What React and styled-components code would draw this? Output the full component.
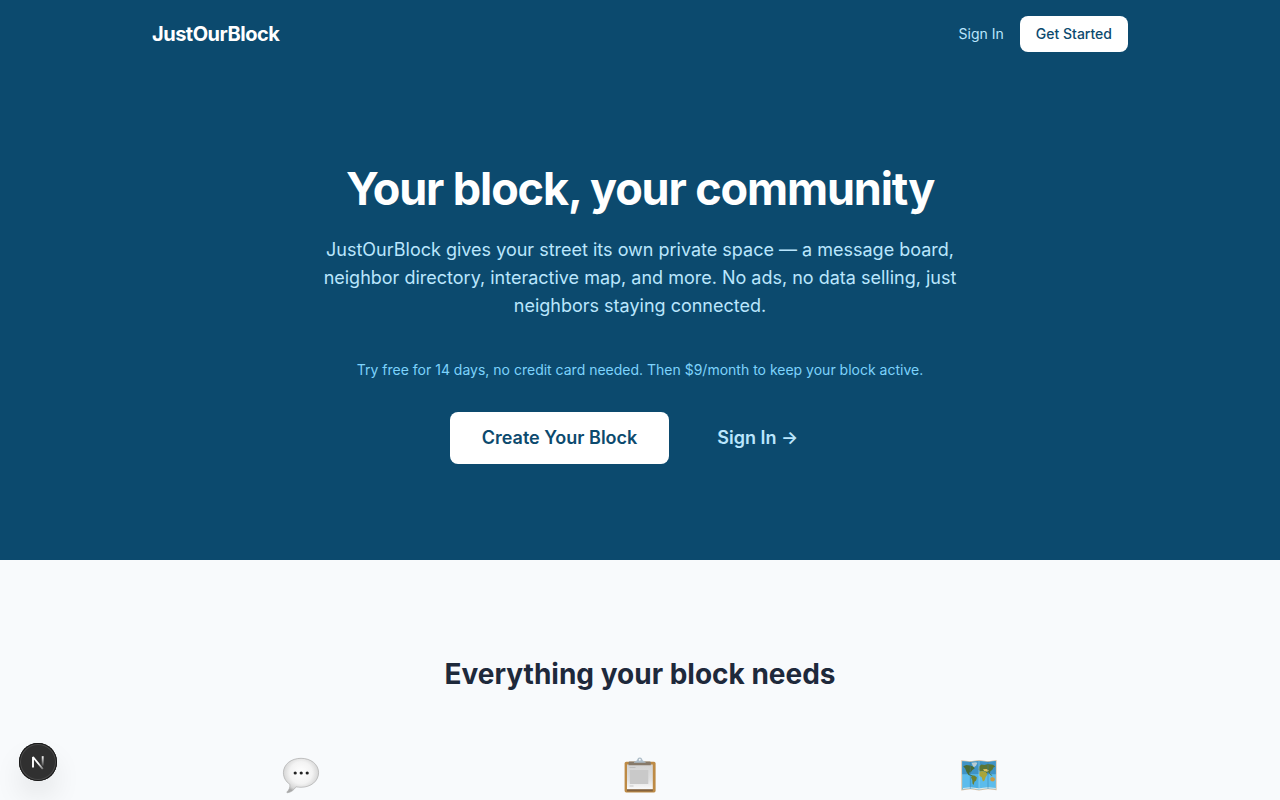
import styled, { createGlobalStyle } from "styled-components";

const GlobalStyle = createGlobalStyle`
    *, *::before, *::after {
        box-sizing: border-box;
    }
    body {
        margin: 0;
        background: #f8fafc;
        font-family: Inter, "Liberation Sans", sans-serif;
        -webkit-font-smoothing: antialiased;
    }
`

function ChatIcon(){
    return(
        <svg width="40" height="40" viewBox="0 0 40 40" aria-hidden="true">
            <defs>
                <radialGradient id="bubble" cx="50%" cy="42%" r="58%">
                    <stop offset="0" stopColor="#ffffff"/>
                    <stop offset="0.55" stopColor="#f3f3f3"/>
                    <stop offset="0.85" stopColor="#d6d6d6"/>
                    <stop offset="1" stopColor="#a9a9a9"/>
                </radialGradient>
            </defs>
            <path d="M20 2.3C10.2 2.3 2.4 8.4 2.4 16.7c0 4.9 2.5 9 6.5 11.7.2 3-.8 5.6-2.9 7.500-.4.5-.1.9.5.8 3.500-.4 6.600-2.600 8.400-5.900 1.600.3 3.300.5 5.100.5 9.800 0 17.600-6.200 17.600-14.600S29.800 2.300 20 2.300z" fill="url(#bubble)" stroke="#a3a3a3" strokeWidth="0.6"/>
            <circle cx="14.2" cy="17" r="1.600" fill="#222"/>
            <circle cx="20.2" cy="17" r="1.600" fill="#222"/>
            <circle cx="26.2" cy="17" r="1.600" fill="#222"/>
        </svg>
    )
}

function ClipboardIcon(){
    return(
        <svg width="40" height="40" viewBox="0 0 40 40" aria-hidden="true">
            <defs>
                <linearGradient id="paper" x1="0" y1="0" x2="0" y2="1">
                    <stop offset="0" stopColor="#d3d3d3"/>
                    <stop offset="0.6" stopColor="#e0e0e0"/>
                    <stop offset="1" stopColor="#fafafa"/>
                </linearGradient>
            </defs>
            <rect x="4.6" y="5.8" width="31" height="30.6" rx="1.6" fill="#bd8a45"/>
            <rect x="7" y="33" width="25.8" height="2.4" fill="#83623f"/>
            <rect x="7" y="8.5" width="25.8" height="24.7" fill="url(#paper)"/>
            <rect x="9.8" y="14" width="18.5" height="14" fill="#c9c9c9"/>
            <path d="M9.5 11.5h6M9.500 30h4" stroke="#b5b5b5" strokeWidth="0.7"/>
            <path d="M8.6 9.300V6.700c0-.7.5-1.200 1.200-1.200h19.800c.7 0 1.200.5 1.200 1.200v2.600z" fill="#877a6a"/>
            <path d="M13.800 6.700c0-1.500 2-1.300 3-2.300.8-.8.900-2.800 3-2.800s2.200 2 3 2.800c1 1 3 .8 3 2.300z" fill="#aebdc9"/>
            <circle cx="19.8" cy="3.8" r="1" fill="#f8fafc"/>
        </svg>
    )
}

function MapIcon(){
    return(
        <svg width="40" height="40" viewBox="0 0 40 40" aria-hidden="true">
            <path d="M2.3 4.3l9 .9 8.7-1.2 9 1.2 8.6-1.200v30.200l-8.600-.9-9 1.200-8.700-1.200-9 1.200z" fill="#d9bfa0"/>
            <path d="M3.2 5.2l8.1.9L20 5l9 1.100 7.800-1v28.200l-7.800-.8-9 1.100-8.700-1.100-8.100 1z" fill="#5cbcec"/>
            <path d="M3.200 5.200l8.100.9L20 5l9 1.100 7.800-1v13.200H3.200z" fill="#3f93c6"/>
            <path d="M11.300 19l8.700.6v14l-8.700-1.100z" fill="#4cb0e4"/>
            <path d="M12.500 6.800l4-.6 2 .5-1.500 3-2.500 1.800z" fill="#b9ccd3"/>
            <path d="M4.300 10.300l3-1.200 4 .3 3.200 1.400 1.200 1.800-2.300 1.300-1.600 2.300-1.800.5.800 1.900 2.500 1-.6.700-3.200-1.300-2-3.100-1.300-3.300z" fill="#496b35"/>
            <path d="M13.200 19.300l2.500.4 2.200 1.700-.8 3-1.700 1.400-.8 3.200-1.100-1.400-.2-3.700-1.200-2.500z" fill="#6e7f2c"/>
            <path d="M20 10.800l2.300-2.300 3 .4 3.700-.9 5 .8 2.200 1.600-1.800 1-1 2.400-2 1.500-.5 2.600-1.800-1.700-1.600 1.300-1.200-1.700-2-.9-3.200.4-1.600-1.600z" fill="#5b7532"/>
            <path d="M20.200 15.800l3-.9 3.400 1.200 1.900 2.300-1.800 2.500-1.200 3.600-1.600 1-1.200-4.300-2.600-1.600z" fill="#a9a53a"/>
            <path d="M24 13.200l3.500-.3 2.500 1.600-1.800 1.200-3-.6z" fill="#e1c45f"/>
            <path d="M31.300 22.300l1.700-1.200 2.500.8.500 2.200-1.700 1.400-2.600-.6z" fill="#c89a42"/>
            <path d="M31 18.300l2.200 1.300" stroke="#526f35" strokeWidth="0.8"/>
            <path d="M4 32l7.300-.7 8.700 1 9-1 7.800.8v1l-7.800-.8-9 1.100-8.700-1.100-7.300.8z" fill="#dce7e7"/>
            <path d="M11.300 5.500v27.200M29 5.500v27.200" stroke="#347da9" strokeWidth="0.5"/>
            <path d="M20 4.500v29" stroke="#9ad9f4" strokeWidth="0.6"/>
        </svg>
    )
}

function NextIcon(){
    return(
        <svg width="38" height="38" viewBox="0 0 38 38" fill="none" aria-hidden="true">
            <defs>
                <linearGradient id="stem" x1="0" y1="13" x2="0" y2="24" gradientUnits="userSpaceOnUse">
                    <stop stopColor="#fff"/>
                    <stop offset="1" stopColor="#fff" stopOpacity="0"/>
                </linearGradient>
                <linearGradient id="slash" x1="20" y1="20" x2="25" y2="27" gradientUnits="userSpaceOnUse">
                    <stop stopColor="#fff"/>
                    <stop offset="1" stopColor="#fff" stopOpacity="0.2"/>
                </linearGradient>
            </defs>
            <path d="M14 24.500V14l9.800 12" stroke="url(#slash)" strokeWidth="1.900" strokeLinejoin="bevel"/>
            <path d="M23.700 13.200v9.600" stroke="url(#stem)" strokeWidth="1.900"/>
        </svg>
    )
}

const features = [
    { name: "Message board", Icon: ChatIcon },
    { name: "Neighbor directory", Icon: ClipboardIcon },
    { name: "Interactive map", Icon: MapIcon },
]

function App(){
    return(
        <>
        <GlobalStyle/>
        <Hero>
            <Nav>
                <Brand>JustOurBlock</Brand>
                <NavLinks>
                    <NavLink href="#signin">Sign In</NavLink>
                    <StartButton>Get Started</StartButton>
                </NavLinks>
            </Nav>
            <HeroContent>
                <Title>Your block, your community</Title>
                <Lead>
                    JustOurBlock gives your street its own private space — a message board,
                    neighbor directory, interactive map, and more. No ads, no data selling, just
                    neighbors staying connected.
                </Lead>
                <Pricing>Try free for 14 days, no credit card needed. Then $9/month to keep your block active.</Pricing>
                <Actions>
                    <CreateButton>Create Your Block</CreateButton>
                    <SignInLink href="#signin">Sign In →</SignInLink>
                </Actions>
            </HeroContent>
        </Hero>
        <Features>
            <FeaturesTitle>Everything your block needs</FeaturesTitle>
            <FeatureGrid>
                {features.map(({ name, Icon }) => (
                    <Feature key={name}><Icon/></Feature>
                ))}
            </FeatureGrid>
        </Features>
        <DevButton aria-label="Open dev tools"><NextIcon/></DevButton>
        </>
    )
}

const Hero = styled.header`
    background: #0c4a6e;
    color: #ffffff;
`

const Nav = styled.nav`
    display: flex;
    align-items: center;
    justify-content: space-between;
    max-width: 1024px;
    margin: 0 auto;
    padding: 16px 24px;
`

const Brand = styled.span`
    font-size: 20px;
    font-weight: 700;
    line-height: 28px;
    letter-spacing: -0.025em;
`

const NavLinks = styled.div`
    display: flex;
    align-items: center;
    gap: 16px;
`

const NavLink = styled.a`
    color: #bae6fd;
    font-size: 14px;
    line-height: 20px;
    text-decoration: none;
`

const Button = styled.button`
    border: 0;
    border-radius: 8px;
    background: #ffffff;
    color: #0c4a6e;
    font-family: inherit;
    cursor: pointer;
`

const StartButton = styled(Button)`
    padding: 8px 16px;
    font-size: 14px;
    font-weight: 500;
    line-height: 20px;
`

const HeroContent = styled.div`
    display: flex;
    flex-direction: column;
    align-items: center;
    max-width: 896px;
    margin: 0 auto;
    padding: 96px 24px;
    text-align: center;
`

const Title = styled.h1`
    margin: 0;
    font-size: 45px;
    font-weight: 700;
    line-height: 50px;
    letter-spacing: -0.025em;
`

const Lead = styled.p`
    max-width: 672px;
    margin: 22px 0 0;
    color: #bae6fd;
    font-size: 18px;
    line-height: 28px;
`

const Pricing = styled.p`
    margin: 40px 0 0;
    color: #7dd3fc;
    font-size: 14px;
    line-height: 20px;
`

const Actions = styled.div`
    display: flex;
    align-items: center;
    justify-content: center;
    flex-wrap: wrap;
    gap: 16px;
    margin-top: 32px;
`

const CreateButton = styled(Button)`
    padding: 12px 32px;
    font-size: 18px;
    font-weight: 600;
    line-height: 28px;
`

const SignInLink = styled.a`
    padding: 12px 32px;
    color: #bae6fd;
    font-size: 18px;
    font-weight: 600;
    line-height: 28px;
    text-decoration: none;
`

const Features = styled.section`
    max-width: 1024px;
    margin: 0 auto;
    padding: 96px 24px 0;
`

const FeaturesTitle = styled.h2`
    margin: 0;
    color: #1e293b;
    font-size: 28px;
    font-weight: 700;
    line-height: 36px;
    text-align: center;
`

const FeatureGrid = styled.div`
    display: grid;
    grid-template-columns: repeat(3, 1fr);
    gap: 40px;
    margin-top: 64px;
`

const Feature = styled.div`
    display: flex;
    justify-content: center;
`

const DevButton = styled.button`
    position: fixed;
    left: 19px;
    bottom: 19px;
    width: 38px;
    height: 38px;
    padding: 0;
    border: 0;
    border-radius: 50%;
    background: #303030;
    box-shadow: inset 0 0 0 1px #171717, inset 0 0 0 2px #4a4a4a, 0 16px 32px -8px rgba(0, 0, 0, 0.24);
    cursor: pointer;
`

export default App;
